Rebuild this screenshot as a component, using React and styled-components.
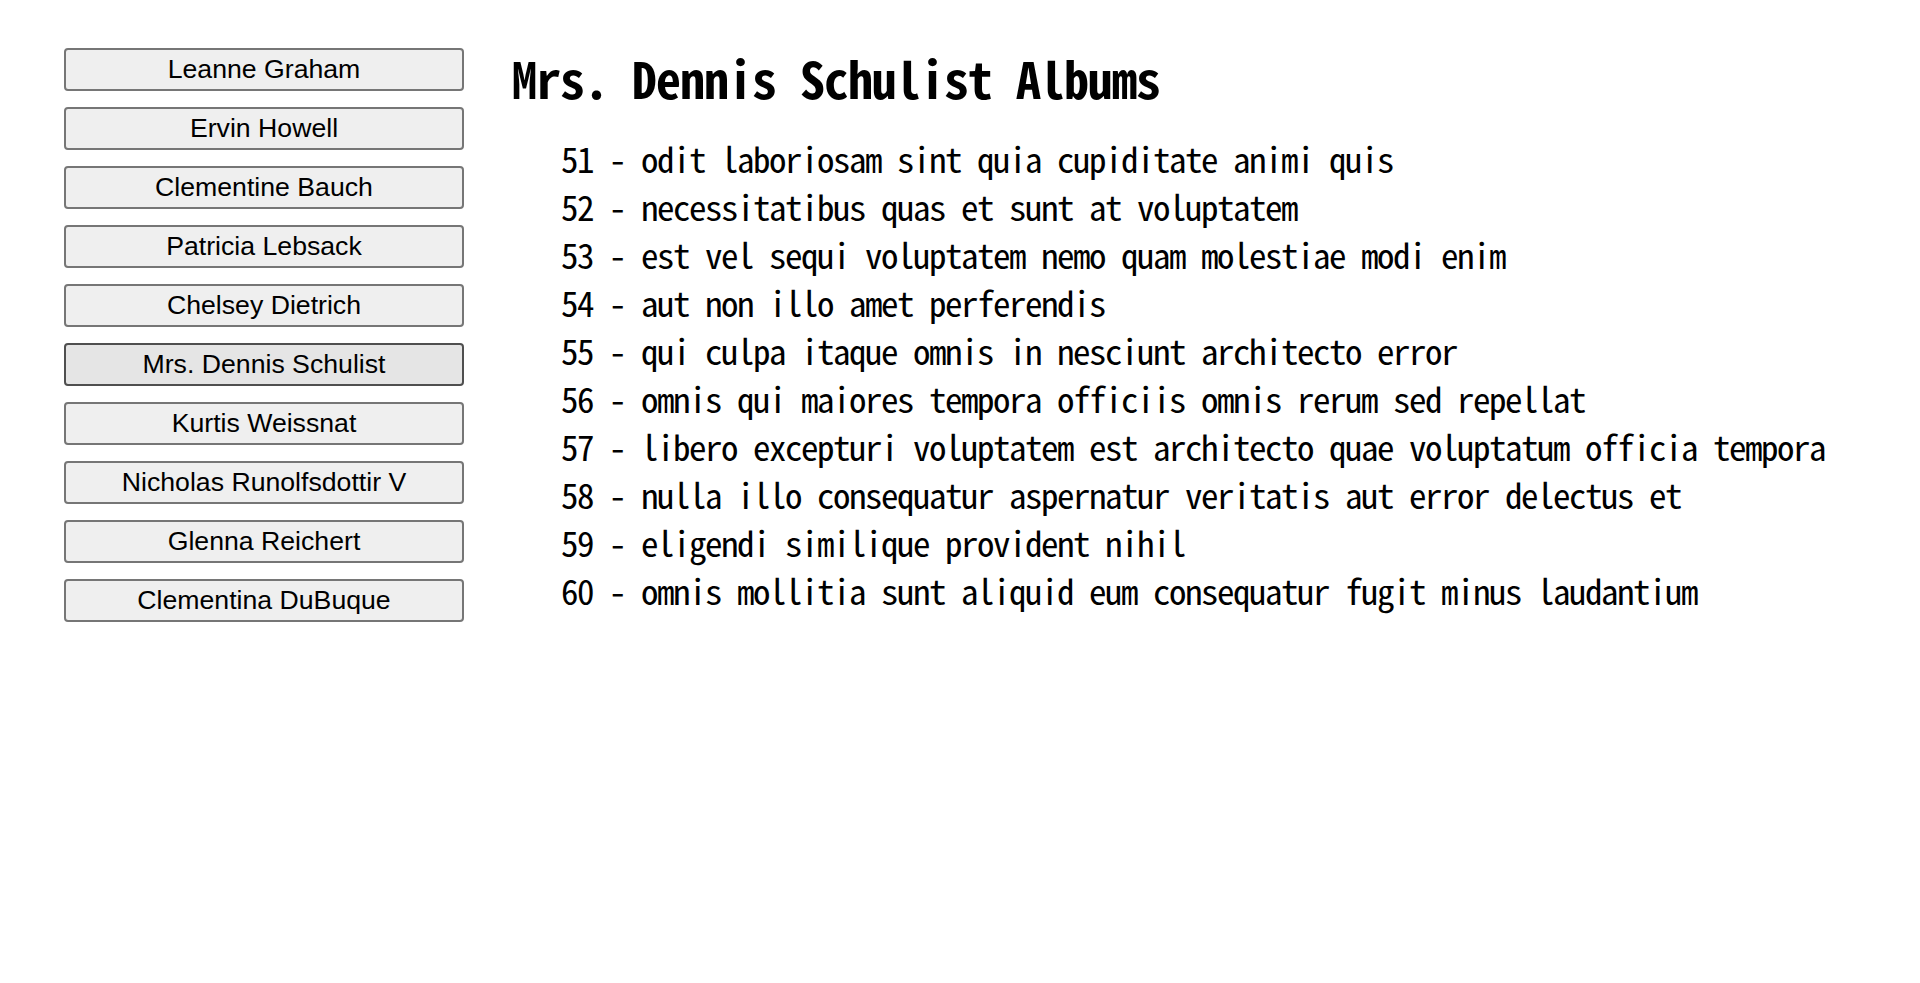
import React, { useState } from "react";
import styled, { createGlobalStyle } from "styled-components";

const users = [
  "Leanne Graham",
  "Ervin Howell",
  "Clementine Bauch",
  "Patricia Lebsack",
  "Chelsey Dietrich",
  "Mrs. Dennis Schulist",
  "Kurtis Weissnat",
  "Nicholas Runolfsdottir V",
  "Glenna Reichert",
  "Clementina DuBuque",
];

const albums = [
  "odit laboriosam sint quia cupiditate animi quis",
  "necessitatibus quas et sunt at voluptatem",
  "est vel sequi voluptatem nemo quam molestiae modi enim",
  "aut non illo amet perferendis",
  "qui culpa itaque omnis in nesciunt architecto error",
  "omnis qui maiores tempora officiis omnis rerum sed repellat",
  "libero excepturi voluptatem est architecto quae voluptatum officia tempora",
  "nulla illo consequatur aspernatur veritatis aut error delectus et",
  "eligendi similique provident nihil",
  "omnis mollitia sunt aliquid eum consequatur fugit minus laudantium",
];

const GlobalStyle = createGlobalStyle`
  body {
    margin: 0;
    background: #fff;
  }
`;

const App = () => {
  const [selected, setSelected] = useState(5);

  return (
    <>
      <GlobalStyle />
      <Wrapper>
        <UserList>
          {users.map((name, i) => (
            <UserButton
              key={name}
              $active={i === selected}
              onClick={() => setSelected(i)}
            >
              {name}
            </UserButton>
          ))}
        </UserList>
        <Albums>
          <h1>{users[selected]} Albums</h1>
          <ul>
            {albums.map((title, i) => (
              <li key={i}>
                {selected * 10 + i + 1} - {title}
              </li>
            ))}
          </ul>
        </Albums>
      </Wrapper>
    </>
  );
};

export default App;

const Wrapper = styled.div`
  display: flex;
  align-items: flex-start;
  padding: 48px 0 0 64px;
  gap: 48px;
`;

const UserList = styled.div`
  display: flex;
  flex-direction: column;
  gap: 16px;
  width: 400px;
  flex-shrink: 0;
`;

const UserButton = styled.button`
  height: 43px;
  padding: 0 8px;
  font-family: "Liberation Sans", Arial, sans-serif;
  font-size: 26.67px;
  color: #000;
  background: ${(p) => (p.$active ? "#e5e5e5" : "#efefef")};
  border: 2px solid ${(p) => (p.$active ? "#4f4f4f" : "#767676")};
  border-radius: 4px;
  cursor: pointer;
`;

const Albums = styled.div`
  font-family: "Noto Sans Mono CJK JP", "Liberation Mono", monospace;
  color: #000;

  h1 {
    margin: -3px 0 0;
    font-size: 50px;
    letter-spacing: -1px;
    line-height: 64px;
    font-weight: bold;
  }

  ul {
    list-style: none;
    margin: 25px 0 0;
    padding: 0 0 0 49px;
  }

  li {
    font-size: 35px;
    letter-spacing: -1.5px;
    line-height: 48px;
  }
`;
